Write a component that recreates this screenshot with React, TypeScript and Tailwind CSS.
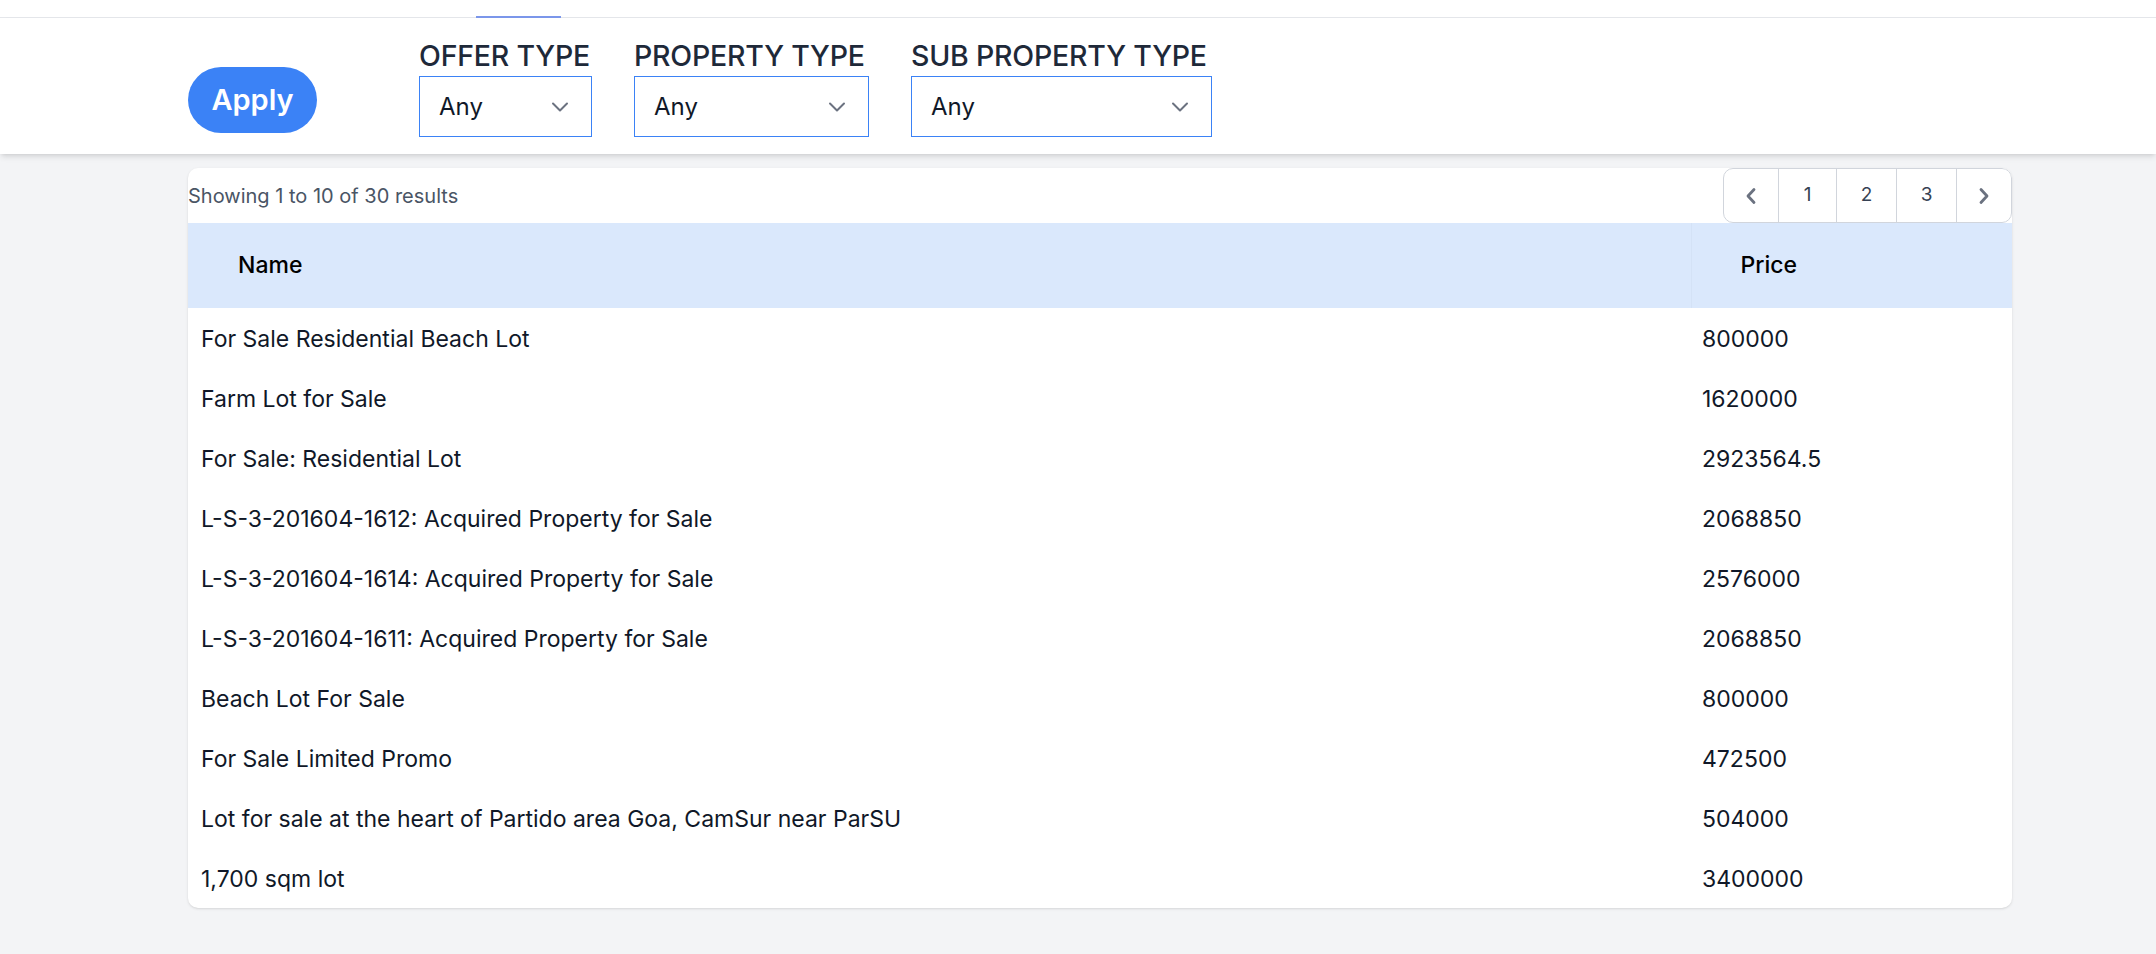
import React from "react";

const rows: [string, string][] = [
  ["For Sale Residential Beach Lot", "800000"],
  ["Farm Lot for Sale", "1620000"],
  ["For Sale: Residential Lot", "2923564.5"],
  ["L-S-3-201604-1612: Acquired Property for Sale", "2068850"],
  ["L-S-3-201604-1614: Acquired Property for Sale", "2576000"],
  ["L-S-3-201604-1611: Acquired Property for Sale", "2068850"],
  ["Beach Lot For Sale", "800000"],
  ["For Sale Limited Promo", "472500"],
  ["Lot for sale at the heart of Partido area Goa, CamSur near ParSU", "504000"],
  ["1,700 sqm lot", "3400000"],
];

function SelectChevron() {
  return (
    <svg width="18" height="12" viewBox="0 0 18 12" fill="none">
      <path d="M2 2.5 L9 9.5 L16 2.5" stroke="#6b7280" strokeWidth="2" strokeLinecap="round" strokeLinejoin="round" />
    </svg>
  );
}

function Chev({ dir }: { dir: "l" | "r" }) {
  return (
    <svg width="12" height="18" viewBox="0 0 12 18" fill="none">
      <path
        d={dir === "l" ? "M9 2.5 L3 9 L9 15.5" : "M3 2.5 L9 9 L3 15.5"}
        stroke="#6b7280"
        strokeWidth="2.8"
        strokeLinecap="round"
        strokeLinejoin="round"
      />
    </svg>
  );
}

function Filter({ label, width }: { label: string; width: string }) {
  return (
    <div className={`flex flex-col ${width}`}>
      <div className="text-[28.5px] leading-[36px] font-medium text-gray-800 tracking-[-0.2px] whitespace-nowrap">{label}</div>
      <div className="mt-[2px] h-[61px] border border-[#3b82f6] flex items-center justify-between pl-[19px] pr-[22px]">
        <span className="text-[24px] text-gray-900">Any</span>
        <SelectChevron />
      </div>
    </div>
  );
}

export default function App() {
  return (
    <div className="min-h-screen bg-gray-100 font-['Inter',sans-serif]">
      <div className="h-[18px] bg-white border-b border-gray-200 flex items-end">
        <div className="ml-[476px] w-[85px] h-[2px] bg-[#7b96ea] translate-y-[1px]" />
      </div>
      <div className="h-[136px] bg-white shadow-md flex items-start pl-[188px]">
        <button className="mt-[49px] w-[129px] h-[66px] rounded-full bg-[#3b82f6] text-white text-[29px] font-semibold">
          Apply
        </button>
        <div className="ml-[102px] mt-[20px] flex gap-[42px]">
          <Filter label="OFFER TYPE" width="w-[173px]" />
          <Filter label="PROPERTY TYPE" width="w-[235px]" />
          <Filter label="SUB PROPERTY TYPE" width="w-[301px]" />
        </div>
      </div>
      <div className="pt-[14px] pb-[45px] pl-[188px]">
        <div className="w-[1824px] bg-white rounded-[10px] shadow-sm overflow-hidden">
          <div className="h-[55px] flex items-center justify-between">
            <span className="text-[20px] text-gray-600">Showing 1 to 10 of 30 results</span>
            <div className="h-[55px] flex border border-gray-300 rounded-[10px] overflow-hidden text-[19px] text-gray-700">
              <div className="w-[54px] flex items-center justify-center"><Chev dir="l" /></div>
              <div className="w-[58px] border-l border-gray-300 flex items-center justify-center">1</div>
              <div className="w-[60px] border-l border-gray-300 flex items-center justify-center">2</div>
              <div className="w-[60px] border-l border-gray-300 flex items-center justify-center">3</div>
              <div className="w-[55px] border-l border-gray-300 flex items-center justify-center"><Chev dir="r" /></div>
            </div>
          </div>
          <table className="w-full border-collapse">
            <thead>
              <tr className="h-[85px] bg-[#dae8fc]">
                <th className="w-[1503px] text-left pl-[50px] text-[23px] font-medium text-black border-r border-[#d4e2f6]">Name</th>
                <th className="text-left pl-[49px] text-[23px] font-medium text-black">Price</th>
              </tr>
            </thead>
            <tbody>
              {rows.map(([n, p], i) => (
                <tr key={i} className="h-[60px]">
                  <td className="pl-[13px] pt-[2px] text-[23px] text-gray-900">{n}</td>
                  <td className="pl-[11px] pt-[2px] text-[23px] text-gray-900">{p}</td>
                </tr>
              ))}
            </tbody>
          </table>
        </div>
      </div>
    </div>
  );
}
